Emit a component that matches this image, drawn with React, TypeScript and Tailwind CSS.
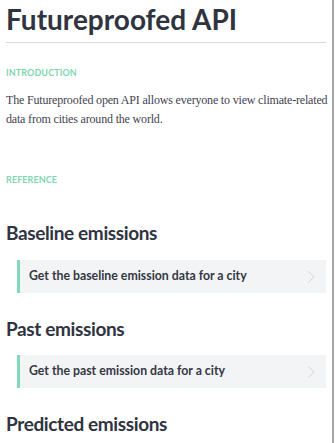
import React from 'react';

const Chevron = () => (
    <svg className="h-[14px] w-[8px] text-[#d3d6dc]" viewBox="0 0 8 14" fill="none" stroke="currentColor" strokeWidth={1}>
        <path d="M1 1l6 6-6 6" />
    </svg>
);

const Endpoint = ({ label }: { label: string }) => (
    <div className="ml-[11px] flex h-[33px] items-center justify-between border-l-[3px] border-[#82d9b8] bg-[#f3f4f6] pl-[9px] pr-[11px]">
        <span className="text-[12.3px] font-bold text-[#343844]">{label}</span>
        <Chevron />
    </div>
);

const SectionLabel = ({ children }: { children: React.ReactNode }) => (
    <div className="text-[9px] font-bold uppercase tracking-[0.01em] text-[#7fd6b3]">{children}</div>
);

export default function App() {
    return (
        <div className="h-[443px] w-[335px] overflow-hidden bg-white font-['Lato',sans-serif]">
            <div className="mr-[1px] h-full border-r-2 border-[#a6a6a6] px-[6px]">
                {/* Title */}
                <h1 className="pt-[1px] text-[28px] font-bold leading-[36px] text-[#2f3440]">
                    Futureproofed API
                </h1>
                <div className="mt-[5px] h-px bg-[#d7d9e0]" />

                <div className="mt-[23px]">
                    <SectionLabel>Introduction</SectionLabel>
                </div>
                <p className="mt-[11px] whitespace-nowrap font-['Liberation_Serif',serif] text-[12px] leading-[19.5px] tracking-[-0.015em] text-[#3f4350]">
                    The Futureproofed open API allows everyone to view climate-related
                    <br />
                    data from cities around the world.
                </p>

                <div className="mt-[43px]">
                    <SectionLabel>Reference</SectionLabel>
                </div>

                <h2 className="mt-[34px] text-[19px] font-bold leading-[26px] tracking-[-0.02em] text-[#2f3440]">Baseline emissions</h2>
                <div className="mt-[14px]">
                    <Endpoint label="Get the baseline emission data for a city" />
                </div>

                <h2 className="mt-[23px] text-[19px] font-bold leading-[26px] tracking-[-0.02em] text-[#2f3440]">Past emissions</h2>
                <div className="mt-[13px]">
                    <Endpoint label="Get the past emission data for a city" />
                </div>

                <h2 className="mt-[23px] text-[19px] font-bold leading-[26px] tracking-[-0.02em] text-[#2f3440]">Predicted emissions</h2>
            </div>
        </div>
    );
}
